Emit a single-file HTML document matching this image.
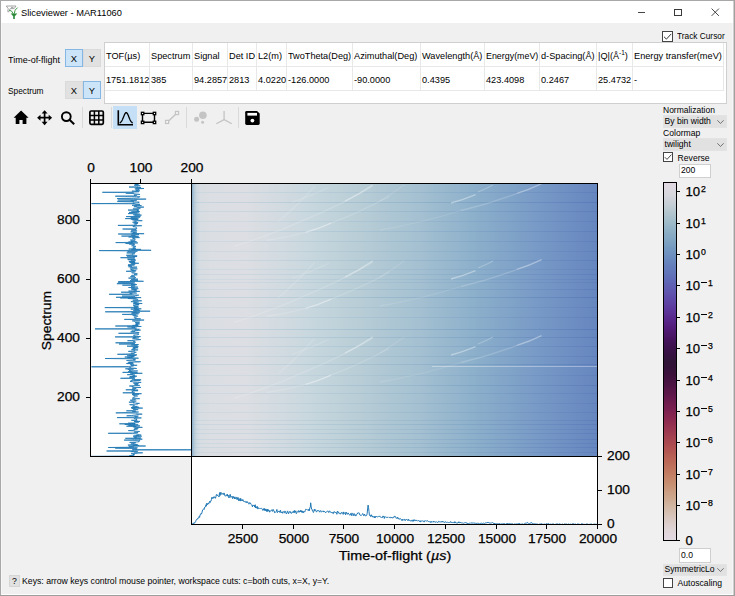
<!DOCTYPE html>
<html><head><meta charset="utf-8"><style>
html,body{margin:0;padding:0}
body{width:735px;height:596px;position:relative;overflow:hidden;background:#f0f0f0;font-family:"Liberation Sans", sans-serif}
.t{position:absolute;white-space:nowrap;line-height:1;color:#000}
sup{font-size:70%;vertical-align:0;position:relative;top:-0.5em}
sup.m{font-size:66%;top:-0.47em;margin-left:0.8px}
.mn{display:inline-block;width:5.6px;height:1.2px;background:#000;vertical-align:0.3em;margin-right:1.4px}
.mt{color:#000;-webkit-text-stroke:0.25px #000}
</style></head><body>
<div style="position:absolute;left:0px;top:0px;width:735px;height:23px;background:#fff;"></div>
<div style="position:absolute;left:0px;top:0px;width:735px;height:1px;background:#a8a8a8;"></div>
<div style="position:absolute;left:0px;top:0px;width:1px;height:596px;background:#a8a8a8;"></div>
<div style="position:absolute;left:734px;top:0px;width:1px;height:596px;background:#a0a0a0;"></div>
<div style="position:absolute;left:733px;top:1px;width:1px;height:594px;background:#cfcfcf;"></div>
<div style="position:absolute;left:732px;top:23px;width:1px;height:571px;background:#f6f6f6;"></div>
<div style="position:absolute;left:0px;top:595px;width:735px;height:1px;background:#9c9c9c;"></div>
<div style="position:absolute;left:1px;top:594px;width:732px;height:1px;background:#fdfdfd;"></div>
<div style="position:absolute;left:1px;top:23px;width:1px;height:571px;background:#f6f6f6;"></div>
<svg style="position:absolute;left:5px;top:4.6px" width="16" height="16" viewBox="0 0 16 16">
<path d="M1.3 1.0 H11 L9.2 3.6 H5.2 L3.8 6.8 H2.8 L3.2 3.6 Z" fill="#fff" stroke="#9a9a9a" stroke-width="0.9" stroke-linejoin="round"/><path d="M6 2.4 H8.4" stroke="#888" stroke-width="0.8"/>
<path d="M4.2 5.2 Q7.2 5.4 8.2 8.8 M12.6 2.6 Q9.4 4.6 9.2 8.8" fill="none" stroke="#3f9a4a" stroke-width="1"/>
<path d="M5.6 8.6 H12.4 L9.8 11.2 V14 H8.2 V11.2 Z" fill="#2a8a3a"/>
</svg>
<div class="t" style="left:20.70px;top:8.30px;font-size:9.5px;color:#000;transform:scaleX(0.9767);transform-origin:0 0;">Sliceviewer - MAR11060</div>
<div style="position:absolute;left:638px;top:12px;width:7px;height:1px;background:#444;"></div>
<div style="position:absolute;left:674px;top:9px;width:8px;height:7px;border:1px solid #3a3a3a;box-sizing:border-box"></div>
<svg style="position:absolute;left:711px;top:8px" width="9" height="9" viewBox="0 0 9 9"><path d="M0.6 0.6 L7.9 7.9 M7.9 0.6 L0.6 7.9" stroke="#333" stroke-width="0.9"/></svg>
<div class="t" style="left:8.30px;top:54.80px;font-size:9.5px;color:#000;transform:scaleX(0.9460);transform-origin:0 0;">Time-of-flight</div>
<div class="t" style="left:8.30px;top:85.80px;font-size:9.8px;color:#000;transform:scaleX(0.8465);transform-origin:0 0;">Spectrum</div>
<div style="position:absolute;left:65px;top:49px;width:18px;height:18px;box-sizing:border-box;background:#cce4f7;border:1px solid #86b6e4;"></div>
<div class="t" style="left:65px;width:18px;text-align:center;top:52.5px;font-size:9.4px;line-height:12px">X</div>
<div style="position:absolute;left:83px;top:49px;width:18px;height:18px;box-sizing:border-box;background:#e1e1e1;border:1px solid #dadada;"></div>
<div class="t" style="left:83px;width:18px;text-align:center;top:52.5px;font-size:9.4px;line-height:12px">Y</div>
<div style="position:absolute;left:65px;top:81px;width:18px;height:18px;box-sizing:border-box;background:#e1e1e1;border:1px solid #dadada;"></div>
<div class="t" style="left:65px;width:18px;text-align:center;top:84.5px;font-size:9.4px;line-height:12px">X</div>
<div style="position:absolute;left:83px;top:81px;width:18px;height:18px;box-sizing:border-box;background:#cce4f7;border:1px solid #86b6e4;"></div>
<div class="t" style="left:83px;width:18px;text-align:center;top:84.5px;font-size:9.4px;line-height:12px">Y</div>
<div style="position:absolute;left:662px;top:31px;width:11px;height:11px;box-sizing:border-box;border:1px solid #444;background:#fff"></div>
<svg style="position:absolute;left:662px;top:31px" width="11" height="11" viewBox="0 0 10 10"><path d="M1.8 5.2 L4 7.4 L8.4 2.6" fill="none" stroke="#333" stroke-width="0.9"/></svg>
<div class="t" style="left:677.30px;top:32.00px;font-size:8.6px;color:#000;transform:scaleX(0.9661);transform-origin:0 0;">Track Cursor</div>
<div style="position:absolute;left:104px;top:42px;width:623px;height:62px;background:#fff;border:1px solid #cfcfcf;box-sizing:border-box"></div>
<div style="position:absolute;left:149px;top:43px;width:1px;height:47px;background:#e8e8e8;"></div>
<div style="position:absolute;left:192px;top:43px;width:1px;height:47px;background:#e8e8e8;"></div>
<div style="position:absolute;left:227px;top:43px;width:1px;height:47px;background:#e8e8e8;"></div>
<div style="position:absolute;left:256px;top:43px;width:1px;height:47px;background:#e8e8e8;"></div>
<div style="position:absolute;left:286px;top:43px;width:1px;height:47px;background:#e8e8e8;"></div>
<div style="position:absolute;left:352px;top:43px;width:1px;height:47px;background:#e8e8e8;"></div>
<div style="position:absolute;left:420px;top:43px;width:1px;height:47px;background:#e8e8e8;"></div>
<div style="position:absolute;left:484px;top:43px;width:1px;height:47px;background:#e8e8e8;"></div>
<div style="position:absolute;left:539px;top:43px;width:1px;height:47px;background:#e8e8e8;"></div>
<div style="position:absolute;left:596px;top:43px;width:1px;height:47px;background:#e8e8e8;"></div>
<div style="position:absolute;left:632px;top:43px;width:1px;height:47px;background:#e8e8e8;"></div>
<div style="position:absolute;left:723px;top:43px;width:1px;height:47px;background:#e8e8e8;"></div>
<div style="position:absolute;left:105px;top:66px;width:619px;height:1px;background:#e8e8e8;"></div>
<div style="position:absolute;left:105px;top:90px;width:619px;height:1px;background:#e8e8e8;"></div>
<div class="t" style="left:106.00px;top:51.50px;font-size:9.2px;color:#000;transform:scaleX(1.0000);transform-origin:0 0;">TOF(µs)</div>
<div class="t" style="left:106.00px;top:75.50px;font-size:9.2px;color:#000;">1751.1812</div>
<div class="t" style="left:151.00px;top:51.50px;font-size:9.2px;color:#000;transform:scaleX(1.0000);transform-origin:0 0;">Spectrum</div>
<div class="t" style="left:151.00px;top:75.50px;font-size:9.2px;color:#000;">385</div>
<div class="t" style="left:194.00px;top:51.50px;font-size:9.2px;color:#000;transform:scaleX(1.0000);transform-origin:0 0;">Signal</div>
<div class="t" style="left:194.00px;top:75.50px;font-size:9.2px;color:#000;">94.2857</div>
<div class="t" style="left:229.00px;top:51.50px;font-size:9.2px;color:#000;transform:scaleX(1.0000);transform-origin:0 0;">Det ID</div>
<div class="t" style="left:229.00px;top:75.50px;font-size:9.2px;color:#000;">2813</div>
<div class="t" style="left:258.00px;top:51.50px;font-size:9.2px;color:#000;transform:scaleX(1.0000);transform-origin:0 0;">L2(m)</div>
<div class="t" style="left:258.00px;top:75.50px;font-size:9.2px;color:#000;">4.0220</div>
<div class="t" style="left:288.00px;top:51.50px;font-size:9.2px;color:#000;transform:scaleX(0.9968);transform-origin:0 0;">TwoTheta(Deg)</div>
<div class="t" style="left:288.00px;top:75.50px;font-size:9.2px;color:#000;">-126.0000</div>
<div class="t" style="left:354.00px;top:51.50px;font-size:9.2px;color:#000;transform:scaleX(1.0000);transform-origin:0 0;">Azimuthal(Deg)</div>
<div class="t" style="left:354.00px;top:75.50px;font-size:9.2px;color:#000;">-90.0000</div>
<div class="t" style="left:422.00px;top:51.50px;font-size:9.2px;color:#000;transform:scaleX(1.0000);transform-origin:0 0;">Wavelength(Å)</div>
<div class="t" style="left:422.00px;top:75.50px;font-size:9.2px;color:#000;">0.4395</div>
<div class="t" style="left:486.00px;top:51.50px;font-size:9.2px;color:#000;transform:scaleX(0.9669);transform-origin:0 0;">Energy(meV)</div>
<div class="t" style="left:486.00px;top:75.50px;font-size:9.2px;color:#000;">423.4098</div>
<div class="t" style="left:541.00px;top:51.50px;font-size:9.2px;color:#000;transform:scaleX(1.0000);transform-origin:0 0;">d-Spacing(Å)</div>
<div class="t" style="left:541.00px;top:75.50px;font-size:9.2px;color:#000;">0.2467</div>
<div class="t" style="left:598.00px;top:51.50px;font-size:9.2px;color:#000;transform:scaleX(1.0000);transform-origin:0 0;">|Q|(Å<sup>-1</sup>)</div>
<div class="t" style="left:598.00px;top:75.50px;font-size:9.2px;color:#000;">25.4732</div>
<div class="t" style="left:634.00px;top:51.50px;font-size:9.2px;color:#000;transform:scaleX(1.0000);transform-origin:0 0;">Energy transfer(meV)</div>
<div class="t" style="left:634.00px;top:75.50px;font-size:9.2px;color:#000;">-</div>
<div style="position:absolute;left:113px;top:106px;width:24px;height:23px;background:#c4dff6;"></div>
<div style="position:absolute;left:82px;top:107px;width:1px;height:21px;background:#dadada;"></div>
<div style="position:absolute;left:111px;top:107px;width:1px;height:21px;background:#dadada;"></div>
<div style="position:absolute;left:186px;top:107px;width:1px;height:21px;background:#dadada;"></div>
<div style="position:absolute;left:238px;top:107px;width:1px;height:21px;background:#dadada;"></div>
<svg style="position:absolute;left:0;top:100px" width="270" height="32" viewBox="0 100 270 32">
<path d="M21.1 110.6 L28.6 117.8 H26.4 V124 H22.6 V120 H19.4 V124 H15.7 V117.8 H13.6 Z" fill="#000"/>
<g fill="#000">
<path d="M44.6 110.2 L47.6 113.6 H41.6 Z"/><path d="M44.6 125.2 L47.6 121.8 H41.6 Z"/>
<path d="M37.1 117.7 L40.5 114.7 V120.7 Z"/><path d="M52.1 117.7 L48.7 114.7 V120.7 Z"/>
</g>
<path d="M44.6 113 V122.4 M39.8 117.7 H49.4" stroke="#000" stroke-width="1.7"/>
<circle cx="66.3" cy="116.6" r="4.4" fill="none" stroke="#000" stroke-width="1.9"/>
<path d="M69.5 119.8 L74.2 124.3" stroke="#000" stroke-width="2"/>
<rect x="89.9" y="111" width="13.4" height="13.4" rx="1.3" fill="none" stroke="#000" stroke-width="1.7"/>
<path d="M94.4 111 V124.4 M98.8 111 V124.4 M89.9 115.5 H103.3 M89.9 119.9 H103.3" stroke="#000" stroke-width="1.5"/>
<path d="M118.3 110.3 V124.8 H133" fill="none" stroke="#000" stroke-width="1.6"/>
<polyline points="119.60,122.97 119.93,122.81 120.26,122.61 120.59,122.35 120.92,122.03 121.25,121.64 121.58,121.17 121.91,120.63 122.24,120.01 122.57,119.32 122.90,118.57 123.23,117.78 123.56,116.95 123.89,116.12 124.22,115.32 124.55,114.57 124.88,113.91 125.21,113.36 125.54,112.94 125.87,112.69 126.20,112.60 126.53,112.69 126.86,112.94 127.19,113.36 127.52,113.91 127.85,114.57 128.18,115.32 128.51,116.12 128.84,116.95 129.17,117.78 129.50,118.57 129.83,119.32 130.16,120.01 130.49,120.63 130.82,121.17 131.15,121.64 131.48,122.03 131.81,122.35 132.14,122.61 132.47,122.81 132.80,122.97" fill="none" stroke="#000" stroke-width="1.3"/>
<path d="M142.5 113.4 H154.5 M142.5 122.3 H154.5 M142.5 113.4 V122.3 M154.5 113.4 V122.3" stroke="#000" stroke-width="1.4"/>
<g fill="#fff" stroke="#000" stroke-width="1.3">
<rect x="141.4" y="112.3" width="2.4" height="2.4"/><rect x="153.3" y="112.3" width="2.4" height="2.4"/>
<rect x="141.4" y="121.2" width="2.4" height="2.4"/><rect x="153.3" y="121.2" width="2.4" height="2.4"/>
</g>
<path d="M167.5 122 L176.5 113.5" stroke="#c4c4c4" stroke-width="1.4"/>
<g fill="#fff" stroke="#c4c4c4" stroke-width="1.3"><rect x="165.6" y="120.4" width="3" height="3"/><rect x="175.5" y="111.5" width="3" height="3"/></g>
<g fill="#c4c4c4"><circle cx="202.9" cy="115.2" r="3.8"/><circle cx="196.6" cy="119.3" r="2.5"/><circle cx="202.6" cy="122.3" r="1.5"/></g>
<path d="M224.1 111 V119.6 M224.1 119.6 L216.3 123.8 M224.1 119.6 L231.8 123.8" stroke="#c4c4c4" stroke-width="1.3" fill="none"/>
<path d="M245.2 112.3 Q245.2 110.9 246.6 110.9 H257 L259.7 113.6 V123.6 Q259.7 125 258.3 125 H246.6 Q245.2 125 245.2 123.6 Z" fill="#000"/>
<rect x="247.4" y="112.9" width="9.6" height="2.7" fill="#fff"/>
<circle cx="252.4" cy="120.6" r="1.9" fill="#fff"/>
</svg>
<div class="t" style="left:663.00px;top:106.00px;font-size:8.6px;color:#000;transform:scaleX(0.9872);transform-origin:0 0;">Normalization</div>
<div style="position:absolute;left:663px;top:115px;width:64px;height:13px;background:#e1e1e1;box-sizing:border-box;border:1px solid #e3e3e3"></div>
<div class="t" style="left:664.50px;top:117.00px;font-size:8.6px;color:#000;">By bin width</div>
<svg style="position:absolute;left:717px;top:119.5px" width="7" height="4" viewBox="0 0 7 4"><path d="M0.3 0.3 L3.5 3.4 L6.7 0.3" fill="none" stroke="#444" stroke-width="0.7"/></svg>
<div class="t" style="left:663.00px;top:129.00px;font-size:8.6px;color:#000;">Colormap</div>
<div style="position:absolute;left:663px;top:138px;width:64px;height:13px;background:#e1e1e1;box-sizing:border-box;border:1px solid #e3e3e3"></div>
<div class="t" style="left:664.50px;top:140.00px;font-size:8.6px;color:#000;">twilight</div>
<svg style="position:absolute;left:717px;top:142.5px" width="7" height="4" viewBox="0 0 7 4"><path d="M0.3 0.3 L3.5 3.4 L6.7 0.3" fill="none" stroke="#444" stroke-width="0.7"/></svg>
<div style="position:absolute;left:663px;top:152px;width:10px;height:10px;box-sizing:border-box;border:1px solid #444;background:#fff"></div>
<svg style="position:absolute;left:663px;top:152px" width="10" height="10" viewBox="0 0 10 10"><path d="M1.8 5.2 L4 7.4 L8.4 2.6" fill="none" stroke="#333" stroke-width="0.9"/></svg>
<div class="t" style="left:677.60px;top:153.50px;font-size:8.6px;color:#000;">Reverse</div>
<div style="position:absolute;left:679px;top:164px;width:32px;height:14px;background:#fff;border:1px solid #cfcfcf;box-sizing:border-box"></div>
<div class="t" style="left:681.00px;top:166.00px;font-size:8.6px;color:#000;">200</div>
<div style="position:absolute;left:679px;top:548px;width:32px;height:15px;background:#fff;border:1px solid #cfcfcf;box-sizing:border-box"></div>
<div class="t" style="left:681.00px;top:550.50px;font-size:8.6px;color:#000;">0.0</div>
<div style="position:absolute;left:663px;top:563.5px;width:64px;height:12.5px;background:#e1e1e1;box-sizing:border-box;border:1px solid #e3e3e3"></div>
<div class="t" style="left:664.50px;top:565.25px;font-size:8.6px;color:#000;">SymmetricLo</div>
<svg style="position:absolute;left:717px;top:567.75px" width="7" height="4" viewBox="0 0 7 4"><path d="M0.3 0.3 L3.5 3.4 L6.7 0.3" fill="none" stroke="#444" stroke-width="0.7"/></svg>
<div style="position:absolute;left:663px;top:578px;width:10px;height:10px;box-sizing:border-box;border:1px solid #444;background:#fff"></div>
<div class="t" style="left:677.60px;top:579.00px;font-size:8.6px;color:#000;">Autoscaling</div>
<div style="position:absolute;left:663px;top:182px;width:14px;height:359px;box-sizing:border-box;border:1px solid #000;background:linear-gradient(to bottom,#e2d9e2 0.00%,#ddd9e0 1.67%,#d6d7dd 3.33%,#ccd2d8 5.00%,#c1cdd3 6.67%,#b3c6ce 8.33%,#a7c0cb 10.00%,#9ab8c8 11.67%,#8fb1c6 13.33%,#85a9c4 15.00%,#7ca2c2 16.67%,#7499c1 18.33%,#6e91c0 20.00%,#6888be 21.67%,#647ebc 23.33%,#6276ba 25.00%,#606db8 26.67%,#5f62b4 28.33%,#5f59b1 30.00%,#5e4eab 31.67%,#5e45a6 33.33%,#5d3a9e 35.00%,#5b3095 36.67%,#58268a 38.33%,#541e7e 40.00%,#4e186f 41.67%,#471461 43.33%,#401253 45.00%,#3a1148 46.67%,#34113e 48.33%,#301437 50.00%,#341238 51.67%,#3a113a 53.33%,#43123e 55.00%,#4d1443 56.67%,#581647 58.33%,#63184b 60.00%,#6f1c4e 61.67%,#792050 63.33%,#842550 65.00%,#8d2b50 66.67%,#963350 68.33%,#9e3b50 70.00%,#a54450 71.67%,#ac4c50 73.33%,#b25652 75.00%,#b86155 76.67%,#bc6a58 78.33%,#c0755e 80.00%,#c37f64 81.67%,#c68a6d 83.33%,#c89477 85.00%,#cb9f83 86.67%,#cda88f 88.33%,#d0b39e 90.00%,#d4bcac 91.67%,#d8c5bb 93.33%,#dbccc8 95.00%,#ded3d4 96.67%,#e1d7dc 98.33%,#e2d9e2 100.00%)"></div>
<div style="position:absolute;left:676px;top:191px;width:4px;height:1px;background:#000;"></div>
<div class="t mt" style="left:685.50px;top:184.80px;font-size:13.2px;transform-origin:0 0;">10<sup class="m">2</sup></div>
<div style="position:absolute;left:676px;top:223px;width:4px;height:1px;background:#000;"></div>
<div class="t mt" style="left:685.50px;top:216.80px;font-size:13.2px;transform-origin:0 0;">10<sup class="m">1</sup></div>
<div style="position:absolute;left:676px;top:254px;width:4px;height:1px;background:#000;"></div>
<div class="t mt" style="left:685.50px;top:247.80px;font-size:13.2px;transform-origin:0 0;">10<sup class="m">0</sup></div>
<div style="position:absolute;left:676px;top:285px;width:4px;height:1px;background:#000;"></div>
<div class="t mt" style="left:685.50px;top:278.80px;font-size:13.2px;transform-origin:0 0;">10<sup class="m"><span class="mn"></span>1</sup></div>
<div style="position:absolute;left:676px;top:317px;width:4px;height:1px;background:#000;"></div>
<div class="t mt" style="left:685.50px;top:310.80px;font-size:13.2px;transform-origin:0 0;">10<sup class="m"><span class="mn"></span>2</sup></div>
<div style="position:absolute;left:676px;top:348px;width:4px;height:1px;background:#000;"></div>
<div class="t mt" style="left:685.50px;top:341.80px;font-size:13.2px;transform-origin:0 0;">10<sup class="m"><span class="mn"></span>3</sup></div>
<div style="position:absolute;left:676px;top:380px;width:4px;height:1px;background:#000;"></div>
<div class="t mt" style="left:685.50px;top:373.80px;font-size:13.2px;transform-origin:0 0;">10<sup class="m"><span class="mn"></span>4</sup></div>
<div style="position:absolute;left:676px;top:411px;width:4px;height:1px;background:#000;"></div>
<div class="t mt" style="left:685.50px;top:404.80px;font-size:13.2px;transform-origin:0 0;">10<sup class="m"><span class="mn"></span>5</sup></div>
<div style="position:absolute;left:676px;top:442px;width:4px;height:1px;background:#000;"></div>
<div class="t mt" style="left:685.50px;top:435.80px;font-size:13.2px;transform-origin:0 0;">10<sup class="m"><span class="mn"></span>6</sup></div>
<div style="position:absolute;left:676px;top:474px;width:4px;height:1px;background:#000;"></div>
<div class="t mt" style="left:685.50px;top:467.80px;font-size:13.2px;transform-origin:0 0;">10<sup class="m"><span class="mn"></span>7</sup></div>
<div style="position:absolute;left:676px;top:505px;width:4px;height:1px;background:#000;"></div>
<div class="t mt" style="left:685.50px;top:498.80px;font-size:13.2px;transform-origin:0 0;">10<sup class="m"><span class="mn"></span>8</sup></div>
<div style="position:absolute;left:676px;top:540px;width:4px;height:1px;background:#000;"></div>
<div class="t mt" style="left:685.50px;top:533.80px;font-size:13.2px;transform-origin:0 0;">0</div>
<div style="position:absolute;left:90px;top:183px;width:101px;height:273px;background:#fff;"></div>
<div style="position:absolute;left:191px;top:456px;width:406px;height:68px;background:#fff;"></div>
<div style="position:absolute;left:192px;top:184px;width:405px;height:272px;background:linear-gradient(to right,#8aaecb 0.00%,#b2c8d6 0.49%,#cbd7df 1.11%,#d7dde2 2.09%,#dbdee3 4.56%,#dcdee3 13.18%,#d5dce1 19.33%,#c8d7de 29.19%,#b8cdd6 41.50%,#a4c0d1 56.28%,#8aaeca 71.06%,#7799c6 85.84%,#6686bf 100.00%);"></div>
<svg style="position:absolute;left:192px;top:184px" width="405" height="272"><defs><linearGradient id="lg" x1="0" x2="1" y1="0" y2="0"><stop offset="0" stop-color="#8fbad2"/><stop offset="0.4" stop-color="#6a9cc0"/><stop offset="1" stop-color="#3558a8"/></linearGradient></defs><rect x="0" y="8" width="405" height="1" fill="url(#lg)" opacity="0.16"/><rect x="0" y="18" width="405" height="1" fill="url(#lg)" opacity="0.26"/><rect x="0" y="27" width="405" height="1" fill="url(#lg)" opacity="0.19"/><rect x="0" y="37" width="405" height="1" fill="url(#lg)" opacity="0.14"/><rect x="0" y="47" width="405" height="1" fill="url(#lg)" opacity="0.18"/><rect x="0" y="57" width="405" height="1" fill="url(#lg)" opacity="0.16"/><rect x="0" y="67" width="405" height="1" fill="url(#lg)" opacity="0.14"/><rect x="0" y="76" width="405" height="1" fill="url(#lg)" opacity="0.18"/><rect x="0" y="85" width="405" height="1" fill="url(#lg)" opacity="0.13"/><rect x="0" y="90" width="405" height="1" fill="url(#lg)" opacity="0.17"/><rect x="0" y="95" width="405" height="1" fill="url(#lg)" opacity="0.14"/><rect x="0" y="98" width="405" height="1" fill="url(#lg)" opacity="0.14"/><rect x="0" y="105" width="405" height="1" fill="url(#lg)" opacity="0.17"/><rect x="0" y="113" width="405" height="1" fill="url(#lg)" opacity="0.26"/><rect x="0" y="123" width="405" height="1" fill="url(#lg)" opacity="0.14"/><rect x="0" y="133" width="405" height="1" fill="url(#lg)" opacity="0.15"/><rect x="0" y="145" width="405" height="1" fill="url(#lg)" opacity="0.26"/><rect x="0" y="153" width="405" height="1" fill="url(#lg)" opacity="0.22"/><rect x="0" y="162" width="405" height="1" fill="url(#lg)" opacity="0.18"/><rect x="0" y="172" width="405" height="1" fill="url(#lg)" opacity="0.17"/><rect x="0" y="180" width="405" height="1" fill="url(#lg)" opacity="0.22"/><rect x="0" y="191" width="405" height="1" fill="url(#lg)" opacity="0.13"/><rect x="0" y="201" width="405" height="1" fill="url(#lg)" opacity="0.21"/><rect x="0" y="209" width="405" height="1" fill="url(#lg)" opacity="0.16"/><rect x="0" y="219" width="405" height="1" fill="url(#lg)" opacity="0.14"/><rect x="0" y="228" width="405" height="1" fill="url(#lg)" opacity="0.14"/><rect x="0" y="236" width="405" height="1" fill="url(#lg)" opacity="0.16"/><rect x="0" y="240" width="405" height="1" fill="url(#lg)" opacity="0.20"/><rect x="0" y="245" width="405" height="1" fill="url(#lg)" opacity="0.15"/><rect x="0" y="249" width="405" height="1" fill="url(#lg)" opacity="0.18"/><rect x="0" y="255" width="405" height="1" fill="url(#lg)" opacity="0.19"/><rect x="0" y="259" width="405" height="1" fill="url(#lg)" opacity="0.16"/><rect x="0" y="263" width="405" height="1" fill="url(#lg)" opacity="0.18"/><rect x="0" y="268" width="405" height="1" fill="url(#lg)" opacity="0.14"/><rect x="240" y="182" width="166" height="1" fill="#ffffff" opacity="0.35"/><path d="M41.9 62.3 Q81.7 50.3 118.3 33.4" stroke="#fff" stroke-width="1.3" opacity="0.16" fill="none"/><path d="M118.3 33.4 Q150.9 19.8 180.8 2.1" stroke="#fff" stroke-width="1.3" opacity="0.16" fill="none"/><path d="M74.3 56.5 Q94.8 53.7 113.6 48.4" stroke="#fff" stroke-width="1.3" opacity="0.14" fill="none"/><path d="M113.6 48.4 Q126.9 44.6 139.1 39.1" stroke="#fff" stroke-width="1.3" opacity="0.4" fill="none"/><path d="M139.1 39.1 Q169.3 27.7 197.0 12.5" stroke="#fff" stroke-width="1.3" opacity="0.16" fill="none"/><path d="M85.9 38.0 Q105.4 21.6 122.9 2.1" stroke="#fff" stroke-width="1.3" opacity="0.13" fill="none"/><path d="M99.8 18.3 Q119.1 12.0 136.8 3.3" stroke="#fff" stroke-width="1.3" opacity="0.13" fill="none"/><path d="M153.0 17.1 Q167.5 10.0 180.8 0.9" stroke="#fff" stroke-width="1.3" opacity="0.3" fill="none"/><path d="M259.0 19.0 Q271.8 15.6 283.5 10.6" stroke="#fff" stroke-width="1.3" opacity="0.36" fill="none"/><path d="M286.0 8.0 Q293.8 5.0 301.0 1.0" stroke="#fff" stroke-width="1.3" opacity="0.24" fill="none"/><path d="M269.0 26.5 Q298.2 19.7 325.0 9.4" stroke="#fff" stroke-width="1.3" opacity="0.18" fill="none"/><path d="M325.0 9.4 Q337.8 5.3 349.6 -0.4" stroke="#fff" stroke-width="1.3" opacity="0.36" fill="none"/><path d="M188.0 46.0 Q230.2 38.7 269.0 26.5" stroke="#fff" stroke-width="1.3" opacity="0.11" fill="none"/><path d="M188.0 16.7 Q200.8 9.6 212.5 0.8" stroke="#fff" stroke-width="1.3" opacity="0.11" fill="none"/><path d="M41.9 138.3 Q81.7 126.3 118.3 109.4" stroke="#fff" stroke-width="1.3" opacity="0.16" fill="none"/><path d="M118.3 109.4 Q150.9 95.8 180.8 78.1" stroke="#fff" stroke-width="1.3" opacity="0.16" fill="none"/><path d="M74.3 132.5 Q94.8 129.7 113.6 124.4" stroke="#fff" stroke-width="1.3" opacity="0.14" fill="none"/><path d="M113.6 124.4 Q126.9 120.6 139.1 115.1" stroke="#fff" stroke-width="1.3" opacity="0.4" fill="none"/><path d="M139.1 115.1 Q169.3 103.7 197.0 88.5" stroke="#fff" stroke-width="1.3" opacity="0.16" fill="none"/><path d="M85.9 114.0 Q105.4 97.6 122.9 78.1" stroke="#fff" stroke-width="1.3" opacity="0.13" fill="none"/><path d="M99.8 94.3 Q119.1 88.0 136.8 79.3" stroke="#fff" stroke-width="1.3" opacity="0.13" fill="none"/><path d="M153.0 93.1 Q167.5 86.0 180.8 76.9" stroke="#fff" stroke-width="1.3" opacity="0.3" fill="none"/><path d="M259.0 95.0 Q271.8 91.6 283.5 86.6" stroke="#fff" stroke-width="1.3" opacity="0.36" fill="none"/><path d="M286.0 84.0 Q293.8 81.0 301.0 77.0" stroke="#fff" stroke-width="1.3" opacity="0.24" fill="none"/><path d="M269.0 102.5 Q298.2 95.7 325.0 85.4" stroke="#fff" stroke-width="1.3" opacity="0.18" fill="none"/><path d="M325.0 85.4 Q337.8 81.3 349.6 75.6" stroke="#fff" stroke-width="1.3" opacity="0.36" fill="none"/><path d="M188.0 122.0 Q230.2 114.7 269.0 102.5" stroke="#fff" stroke-width="1.3" opacity="0.11" fill="none"/><path d="M188.0 92.7 Q200.8 85.6 212.5 76.8" stroke="#fff" stroke-width="1.3" opacity="0.11" fill="none"/><path d="M41.9 214.3 Q81.7 202.3 118.3 185.4" stroke="#fff" stroke-width="1.3" opacity="0.16" fill="none"/><path d="M118.3 185.4 Q150.9 171.8 180.8 154.1" stroke="#fff" stroke-width="1.3" opacity="0.16" fill="none"/><path d="M74.3 208.5 Q94.8 205.7 113.6 200.4" stroke="#fff" stroke-width="1.3" opacity="0.14" fill="none"/><path d="M113.6 200.4 Q126.9 196.6 139.1 191.1" stroke="#fff" stroke-width="1.3" opacity="0.4" fill="none"/><path d="M139.1 191.1 Q169.3 179.7 197.0 164.5" stroke="#fff" stroke-width="1.3" opacity="0.16" fill="none"/><path d="M85.9 190.0 Q105.4 173.6 122.9 154.1" stroke="#fff" stroke-width="1.3" opacity="0.13" fill="none"/><path d="M99.8 170.3 Q119.1 164.0 136.8 155.3" stroke="#fff" stroke-width="1.3" opacity="0.13" fill="none"/><path d="M153.0 169.1 Q167.5 162.0 180.8 152.9" stroke="#fff" stroke-width="1.3" opacity="0.3" fill="none"/><path d="M259.0 171.0 Q271.8 167.6 283.5 162.6" stroke="#fff" stroke-width="1.3" opacity="0.36" fill="none"/><path d="M286.0 160.0 Q293.8 157.0 301.0 153.0" stroke="#fff" stroke-width="1.3" opacity="0.24" fill="none"/><path d="M269.0 178.5 Q298.2 171.7 325.0 161.4" stroke="#fff" stroke-width="1.3" opacity="0.18" fill="none"/><path d="M325.0 161.4 Q337.8 157.3 349.6 151.6" stroke="#fff" stroke-width="1.3" opacity="0.36" fill="none"/><path d="M188.0 198.0 Q230.2 190.7 269.0 178.5" stroke="#fff" stroke-width="1.3" opacity="0.11" fill="none"/><path d="M188.0 168.7 Q200.8 161.6 212.5 152.8" stroke="#fff" stroke-width="1.3" opacity="0.11" fill="none"/></svg>
<svg style="position:absolute;left:0;top:0" width="735" height="596"><defs><clipPath id="cs"><rect x="91" y="184" width="100" height="272"/></clipPath><clipPath id="cb"><rect x="192" y="457" width="405" height="67"/></clipPath></defs><polyline clip-path="url(#cs)" points="90.5,456.6 91.5,456.3 133.4,456.0 129.4,455.7 133.8,455.4 133.6,455.2 134.4,454.9 132.9,454.6 134.6,454.3 133.4,454.0 131.1,453.7 137.3,453.4 137.3,453.1 142.7,452.8 135.0,452.5 133.8,452.2 133.5,451.9 130.7,451.6 137.8,451.3 106.6,451.0 131.8,450.7 134.6,450.4 139.3,450.1 221.8,449.8 132.4,449.5 133.3,449.2 137.0,448.9 134.9,448.6 129.3,448.4 115.2,448.1 137.5,447.8 108.2,447.5 132.0,447.2 133.8,446.9 133.3,446.6 128.8,446.3 145.6,446.0 132.8,445.7 138.8,445.4 127.9,445.1 131.2,444.8 137.5,444.5 134.7,444.2 130.9,443.9 134.1,443.6 134.2,443.3 133.4,443.0 135.9,442.7 129.6,442.4 135.2,442.1 138.7,441.8 138.3,441.6 139.1,441.3 139.1,441.0 140.1,440.7 132.9,440.4 124.1,440.1 130.9,439.8 134.4,439.5 142.3,439.2 139.0,438.9 139.9,438.6 125.3,438.3 141.1,438.0 134.3,437.7 136.6,437.4 136.7,437.1 133.3,436.8 137.5,436.5 141.7,436.2 133.4,435.9 138.8,435.6 135.9,435.3 141.2,435.0 137.7,434.8 138.2,434.5 138.1,434.2 137.1,433.9 132.5,433.6 108.2,433.3 132.6,433.0 137.1,432.7 138.1,432.4 134.1,432.1 136.8,431.8 139.7,431.5 136.4,431.2 134.0,430.9 128.3,430.6 133.7,430.3 134.8,430.0 135.0,429.7 133.8,429.4 137.5,429.1 134.9,428.8 136.2,428.5 138.3,428.2 134.1,428.0 135.6,427.7 142.4,427.4 138.9,427.1 132.8,426.8 136.2,426.5 126.5,426.2 139.9,425.9 128.5,425.6 134.9,425.3 134.4,425.0 138.2,424.7 124.7,424.4 135.0,424.1 119.4,423.8 135.2,423.5 128.1,423.2 134.4,422.9 137.7,422.6 138.7,422.3 137.7,422.0 134.0,421.7 140.0,421.4 134.4,421.2 137.4,420.9 134.2,420.6 131.4,420.3 136.8,420.0 137.0,419.7 136.0,419.4 136.9,419.1 134.3,418.8 134.1,418.5 135.6,418.2 141.4,417.9 117.0,417.6 134.6,417.3 137.6,417.0 134.7,416.7 134.7,416.4 138.4,416.1 126.7,415.8 131.3,415.5 133.4,415.2 136.1,414.9 136.2,414.6 139.3,414.4 142.2,414.1 137.8,413.8 136.9,413.5 135.3,413.2 115.8,412.9 121.8,412.6 133.2,412.3 138.6,412.0 132.2,411.7 135.7,411.4 135.5,411.1 126.4,410.8 133.5,410.5 135.4,410.2 135.0,409.9 138.2,409.6 133.1,409.3 135.5,409.0 134.6,408.7 131.7,408.4 142.7,408.1 135.0,407.8 131.0,407.6 139.1,407.3 132.1,407.0 136.1,406.7 137.4,406.4 133.2,406.1 133.8,405.8 133.5,405.5 134.6,405.2 130.4,404.9 129.6,404.6 134.4,404.3 137.7,404.0 136.5,403.7 139.5,403.4 136.6,403.1 133.2,402.8 134.3,402.5 128.9,402.2 131.9,401.9 131.7,401.6 135.2,401.3 136.3,401.0 132.9,400.8 132.7,400.5 130.1,400.2 134.0,399.9 135.0,399.6 135.5,399.3 132.0,399.0 139.7,398.7 137.5,398.4 133.9,398.1 132.6,397.8 133.2,397.5 134.4,397.2 133.9,396.9 135.3,396.6 136.1,396.3 137.7,396.0 137.0,395.7 133.5,395.4 134.9,395.1 132.7,394.8 132.1,394.5 139.0,394.2 132.4,394.0 141.5,393.7 132.6,393.4 134.3,393.1 122.8,392.8 133.6,392.5 134.6,392.2 132.8,391.9 132.1,391.6 132.9,391.3 131.6,391.0 137.9,390.7 132.8,390.4 138.1,390.1 125.8,389.8 133.3,389.5 134.8,389.2 132.4,388.9 136.2,388.6 134.9,388.3 132.3,388.0 134.3,387.7 140.9,387.4 133.7,387.2 133.8,386.9 131.8,386.6 133.3,386.3 129.3,386.0 132.4,385.7 139.7,385.4 135.8,385.1 134.6,384.8 135.9,384.5 138.0,384.2 134.4,383.9 138.5,383.6 135.7,383.3 133.2,383.0 137.5,382.7 141.2,382.4 137.6,382.1 133.4,381.8 130.1,381.5 132.2,381.2 130.8,380.9 130.8,380.6 140.1,380.4 134.3,380.1 141.1,379.8 136.2,379.5 131.9,379.2 135.0,378.9 133.5,378.6 120.5,378.3 128.5,378.0 134.6,377.7 132.8,377.4 129.3,377.1 135.4,376.8 130.0,376.5 136.9,376.2 133.9,375.9 134.4,375.6 132.7,375.3 134.9,375.0 127.2,374.7 132.6,374.4 130.7,374.1 133.2,373.8 132.3,373.6 142.3,373.3 130.1,373.0 137.5,372.7 122.6,372.4 131.8,372.1 132.4,371.8 128.1,371.5 135.9,371.2 137.7,370.9 129.1,370.6 130.7,370.3 129.5,370.0 129.4,369.7 127.9,369.4 133.5,369.1 125.4,368.8 136.7,368.5 135.0,368.2 129.6,367.9 129.6,367.6 130.8,367.3 127.9,367.0 91.5,366.8 128.4,366.5 132.4,366.2 133.6,365.9 130.8,365.6 137.1,365.3 133.3,365.0 133.9,364.7 130.3,364.4 132.6,364.1 132.2,363.8 126.4,363.5 133.5,363.2 127.8,362.9 132.7,362.6 128.7,362.3 138.4,362.0 140.6,361.7 135.2,361.4 135.4,361.1 129.2,360.8 126.6,360.5 132.0,360.2 135.4,360.0 133.2,359.7 135.2,359.4 135.6,359.1 128.9,358.8 105.1,358.5 138.5,358.2 131.5,357.9 127.5,357.6 132.5,357.3 124.8,357.0 134.4,356.7 130.8,356.4 133.5,356.1 127.1,355.8 135.7,355.5 128.9,355.2 137.0,354.9 129.2,354.6 117.4,354.3 125.2,354.0 134.3,353.7 133.3,353.4 130.8,353.2 134.5,352.9 134.0,352.6 136.3,352.3 134.0,352.0 134.4,351.7 128.3,351.4 130.6,351.1 132.5,350.8 134.7,350.5 133.9,350.2 138.1,349.9 131.5,349.6 133.3,349.3 134.7,349.0 133.4,348.7 135.4,348.4 132.5,348.1 138.1,347.8 133.3,347.5 137.3,347.2 134.1,346.9 138.4,346.6 128.6,346.4 127.0,346.1 133.2,345.8 135.0,345.5 137.7,345.2 131.3,344.9 138.6,344.6 131.8,344.3 119.0,344.0 129.4,343.7 134.9,343.4 131.1,343.1 115.5,342.8 133.7,342.5 135.8,342.2 133.1,341.9 133.5,341.6 134.8,341.3 134.1,341.0 127.5,340.7 133.8,340.4 135.2,340.1 138.1,339.8 140.7,339.6 136.9,339.3 135.3,339.0 132.5,338.7 135.4,338.4 137.4,338.1 138.8,337.8 132.8,337.5 136.0,337.2 115.1,336.9 140.5,336.6 136.1,336.3 133.9,336.0 133.5,335.7 134.5,335.4 133.7,335.1 137.8,334.8 138.5,334.5 137.6,334.2 138.9,333.9 134.4,333.6 118.5,333.3 134.6,333.0 135.9,332.8 139.2,332.5 135.7,332.2 130.6,331.9 135.1,331.6 133.9,331.3 131.7,331.0 133.7,330.7 138.6,330.4 140.6,330.1 134.6,329.8 138.8,329.5 139.3,329.2 95.0,328.9 135.9,328.6 136.0,328.3 136.6,328.0 131.7,327.7 135.2,327.4 128.2,327.1 127.3,326.8 141.3,326.5 135.3,326.2 115.4,326.0 138.1,325.7 132.5,325.4 138.4,325.1 135.3,324.8 137.7,324.5 136.0,324.2 139.7,323.9 137.0,323.6 135.6,323.3 139.0,323.0 137.1,322.7 135.2,322.4 139.9,322.1 135.3,321.8 134.6,321.5 134.9,321.2 132.3,320.9 134.9,320.6 141.6,320.3 144.1,320.0 136.5,319.7 124.3,319.4 134.7,319.2 140.7,318.9 138.9,318.6 134.8,318.3 136.5,318.0 134.2,317.7 134.3,317.4 133.9,317.1 134.0,316.8 137.4,316.5 138.1,316.2 137.8,315.9 136.0,315.6 132.7,315.3 136.3,315.0 133.9,314.7 122.2,314.4 138.0,314.1 138.5,313.8 135.4,313.5 131.4,313.2 139.1,312.9 139.8,312.6 132.3,312.4 136.8,312.1 105.2,311.8 133.4,311.5 150.1,311.2 135.4,310.9 133.3,310.6 140.1,310.3 137.1,310.0 134.5,309.7 138.7,309.4 130.8,309.1 141.3,308.8 133.9,308.5 137.0,308.2 135.1,307.9 104.8,307.6 138.6,307.3 133.8,307.0 138.3,306.7 135.3,306.4 134.2,306.1 135.4,305.8 133.2,305.6 133.8,305.3 138.6,305.0 135.5,304.7 139.1,304.4 137.1,304.1 133.0,303.8 142.2,303.5 133.9,303.2 136.6,302.9 135.8,302.6 133.5,302.3 138.6,302.0 130.9,301.7 132.2,301.4 136.0,301.1 141.7,300.8 136.8,300.5 132.8,300.2 137.2,299.9 137.4,299.6 138.1,299.3 134.3,299.0 133.2,298.8 127.9,298.5 136.5,298.2 120.2,297.9 141.1,297.6 116.1,297.3 133.8,297.0 135.1,296.7 134.5,296.4 122.0,296.1 136.5,295.8 135.8,295.5 138.8,295.2 134.6,294.9 132.1,294.6 109.1,294.3 132.1,294.0 132.0,293.7 129.7,293.4 136.7,293.1 135.3,292.8 133.6,292.5 121.1,292.2 130.3,292.0 132.1,291.7 139.8,291.4 128.5,291.1 135.0,290.8 136.6,290.5 134.9,290.2 133.6,289.9 136.6,289.6 131.4,289.3 135.9,289.0 138.3,288.7 131.4,288.4 132.0,288.1 134.6,287.8 128.5,287.5 137.9,287.2 136.0,286.9 132.3,286.6 131.0,286.3 134.7,286.0 135.1,285.7 130.9,285.4 122.4,285.2 134.8,284.9 136.8,284.6 131.1,284.3 135.4,284.0 116.9,283.7 132.6,283.4 133.5,283.1 117.9,282.8 125.4,282.5 134.3,282.2 135.0,281.9 118.3,281.6 143.5,281.3 135.6,281.0 130.0,280.7 138.0,280.4 137.4,280.1 134.8,279.8 131.1,279.5 138.0,279.2 134.0,278.9 133.6,278.6 134.9,278.4 128.5,278.1 134.4,277.8 135.9,277.5 134.1,277.2 133.5,276.9 130.4,276.6 134.9,276.3 133.6,276.0 133.0,275.7 131.4,275.4 135.4,275.1 137.3,274.8 134.0,274.5 135.4,274.2 136.6,273.9 137.3,273.6 133.5,273.3 132.2,273.0 131.6,272.7 132.8,272.4 134.3,272.1 135.3,271.8 131.5,271.6 126.1,271.3 129.9,271.0 136.2,270.7 131.6,270.4 133.6,270.1 130.6,269.8 131.8,269.5 130.7,269.2 137.3,268.9 133.6,268.6 132.1,268.3 129.9,268.0 130.8,267.7 134.1,267.4 137.1,267.1 128.5,266.8 129.9,266.5 132.0,266.2 130.7,265.9 127.9,265.6 132.5,265.3 134.5,265.0 128.1,264.8 133.0,264.5 135.1,264.2 135.2,263.9 131.3,263.6 138.8,263.3 134.0,263.0 130.2,262.7 135.2,262.4 129.3,262.1 134.9,261.8 128.9,261.5 134.6,261.2 130.8,260.9 135.6,260.6 134.5,260.3 133.7,260.0 128.1,259.7 135.4,259.4 127.4,259.1 133.6,258.8 133.6,258.5 134.0,258.2 134.8,258.0 120.5,257.7 132.8,257.4 134.7,257.1 132.9,256.8 136.9,256.5 126.9,256.2 137.2,255.9 130.6,255.6 126.3,255.3 129.6,255.0 132.1,254.7 133.1,254.4 132.5,254.1 134.9,253.8 132.5,253.5 132.5,253.2 126.7,252.9 134.0,252.6 135.5,252.3 131.5,252.0 127.5,251.7 129.0,251.4 137.4,251.2 131.1,250.9 99.1,250.6 151.1,250.3 134.7,250.0 131.2,249.7 141.0,249.4 128.7,249.1 132.6,248.8 135.7,248.5 132.6,248.2 135.4,247.9 133.5,247.6 133.4,247.3 133.6,247.0 133.2,246.7 136.0,246.4 134.5,246.1 131.6,245.8 133.5,245.5 133.0,245.2 134.6,244.9 133.8,244.6 134.4,244.4 129.2,244.1 134.4,243.8 125.6,243.5 129.7,243.2 137.9,242.9 115.7,242.6 132.9,242.3 128.5,242.0 136.6,241.7 130.9,241.4 132.2,241.1 135.2,240.8 130.8,240.5 131.0,240.2 130.5,239.9 133.5,239.6 135.4,239.3 135.0,239.0 135.0,238.7 132.9,238.4 134.3,238.1 132.1,237.8 139.5,237.6 134.6,237.3 128.6,237.0 131.1,236.7 138.6,236.4 121.5,236.1 133.0,235.8 135.4,235.5 131.2,235.2 137.3,234.9 139.0,234.6 132.1,234.3 118.2,234.0 144.1,233.7 131.7,233.4 135.2,233.1 135.2,232.8 132.9,232.5 136.9,232.2 130.6,231.9 132.3,231.6 131.7,231.3 136.8,231.0 137.0,230.8 136.7,230.5 131.2,230.2 135.2,229.9 136.2,229.6 130.4,229.3 122.6,229.0 136.8,228.7 137.0,228.4 135.8,228.1 136.6,227.8 136.0,227.5 135.6,227.2 134.9,226.9 132.8,226.6 134.6,226.3 134.2,226.0 141.8,225.7 117.9,225.4 135.3,225.1 134.8,224.8 135.1,224.5 134.7,224.2 137.0,224.0 135.4,223.7 137.8,223.4 133.6,223.1 136.6,222.8 138.1,222.5 132.5,222.2 136.2,221.9 136.4,221.6 134.8,221.3 134.4,221.0 142.3,220.7 139.0,220.4 133.2,220.1 132.4,219.8 137.7,219.5 130.8,219.2 138.6,218.9 125.1,218.6 137.6,218.3 135.5,218.0 132.6,217.7 130.8,217.4 140.1,217.2 134.8,216.9 126.1,216.6 140.5,216.3 134.4,216.0 135.5,215.7 135.5,215.4 141.5,215.1 133.3,214.8 134.7,214.5 139.8,214.2 138.4,213.9 128.0,213.6 130.8,213.3 137.2,213.0 136.0,212.7 129.0,212.4 139.2,212.1 131.4,211.8 139.7,211.5 136.7,211.2 137.9,210.9 137.1,210.6 138.7,210.4 128.0,210.1 134.9,209.8 138.6,209.5 136.9,209.2 132.9,208.9 140.2,208.6 139.8,208.3 140.4,208.0 136.7,207.7 137.4,207.4 143.9,207.1 133.8,206.8 136.6,206.5 136.9,206.2 134.6,205.9 141.5,205.6 132.0,205.3 134.2,205.0 134.6,204.7 140.0,204.4 135.7,204.1 135.5,203.8 91.5,203.6 134.3,203.3 132.8,203.0 139.2,202.7 138.1,202.4 139.2,202.1 134.6,201.8 117.4,201.5 133.7,201.2 130.7,200.9 135.6,200.6 136.7,200.3 117.7,200.0 133.5,199.7 138.0,199.4 146.1,199.1 133.9,198.8 117.1,198.5 131.5,198.2 136.9,197.9 138.6,197.6 138.4,197.3 138.5,197.0 140.1,196.8 136.5,196.5 115.3,196.2 133.5,195.9 133.9,195.6 136.8,195.3 133.8,195.0 137.7,194.7 139.9,194.4 137.1,194.1 134.0,193.8 133.9,193.5 125.8,193.2 133.7,192.9 126.3,192.6 102.4,192.3 136.0,192.0 138.9,191.7 134.3,191.4 131.9,191.1 139.8,190.8 136.4,190.5 137.7,190.2 135.6,190.0 137.8,189.7 139.2,189.4 139.4,189.1 134.8,188.8 144.0,188.5 136.6,188.2 136.1,187.9 141.0,187.6 133.5,187.3 129.0,187.0 136.6,186.7 137.5,186.4 137.1,186.1 140.3,185.8 137.6,185.5 134.2,185.2 137.9,184.9 134.9,184.6 138.6,184.3 135.8,184.0 136.3,183.7" fill="none" stroke="#1f77b4" stroke-width="0.8" stroke-linejoin="bevel"/><polyline clip-path="url(#cb)" points="191.5,523.8 192.0,523.7 192.4,523.3 192.9,523.6 193.3,523.8 193.8,522.8 194.2,523.4 194.7,522.5 195.1,522.5 195.6,521.8 196.0,520.4 196.5,519.4 196.9,519.7 197.4,519.3 197.8,518.2 198.3,518.1 198.7,518.2 199.2,516.4 199.6,517.3 200.1,514.7 200.5,514.7 201.0,513.5 201.4,514.1 201.9,512.9 202.3,511.0 202.8,509.6 203.2,509.3 203.7,508.9 204.1,509.5 204.6,507.2 205.0,507.0 205.5,506.9 206.0,504.7 206.4,506.2 206.9,503.1 207.3,504.9 207.8,504.4 208.2,503.3 208.7,504.0 209.1,502.5 209.6,501.4 210.0,502.7 210.5,501.2 210.9,501.3 211.4,499.7 211.8,497.4 212.3,498.6 212.7,497.7 213.2,497.0 213.6,498.3 214.1,496.6 214.5,497.3 215.0,497.2 215.4,498.3 215.9,496.9 216.3,494.7 216.8,494.3 217.2,495.9 217.7,495.3 218.1,495.7 218.6,496.3 219.0,497.0 219.5,492.6 220.0,495.6 220.4,494.0 220.9,492.2 221.3,494.4 221.8,493.9 222.2,493.4 222.7,494.3 223.1,493.7 223.6,494.5 224.0,492.9 224.5,493.8 224.9,495.9 225.4,496.2 225.8,495.5 226.3,495.6 226.7,495.9 227.2,494.0 227.6,496.1 228.1,495.9 228.5,495.4 229.0,498.0 229.4,495.3 229.9,495.2 230.3,494.4 230.8,497.4 231.2,497.0 231.7,496.4 232.1,497.2 232.6,498.6 233.0,496.1 233.5,497.6 234.0,497.1 234.4,498.9 234.9,496.8 235.3,498.4 235.8,499.0 236.2,497.5 236.7,497.3 237.1,499.8 237.6,497.8 238.0,497.3 238.5,499.0 238.9,501.0 239.4,499.0 239.8,498.6 240.3,501.1 240.7,498.3 241.2,500.5 241.6,500.6 242.1,499.5 242.5,500.7 243.0,499.7 243.4,501.3 243.9,501.0 244.3,501.6 244.8,501.6 245.2,501.4 245.7,501.7 246.1,502.7 246.6,501.6 247.0,502.8 247.5,501.7 248.0,502.5 248.4,503.4 248.9,504.2 249.3,503.6 249.8,502.5 250.2,503.8 250.7,503.3 251.1,504.5 251.6,504.9 252.0,505.5 252.5,506.9 252.9,504.9 253.4,505.4 253.8,505.7 254.3,505.1 254.7,507.1 255.2,504.7 255.6,508.0 256.1,506.6 256.5,508.2 257.0,507.5 257.4,506.4 257.9,509.1 258.3,507.8 258.8,508.1 259.2,508.3 259.7,508.4 260.1,508.2 260.6,508.6 261.0,508.8 261.5,508.4 262.0,508.7 262.4,509.5 262.9,510.5 263.3,508.8 263.8,509.9 264.2,508.3 264.7,510.3 265.1,510.9 265.6,508.9 266.0,510.7 266.5,511.4 266.9,509.1 267.4,511.5 267.8,509.2 268.3,511.2 268.7,510.1 269.2,510.4 269.6,512.2 270.1,510.7 270.5,511.1 271.0,510.7 271.4,510.5 271.9,509.7 272.3,511.3 272.8,511.2 273.2,509.4 273.7,510.7 274.1,510.8 274.6,512.7 275.0,512.7 275.5,512.0 276.0,511.7 276.4,511.2 276.9,509.4 277.3,512.7 277.8,512.1 278.2,511.2 278.7,511.6 279.1,510.9 279.6,512.1 280.0,512.6 280.5,510.2 280.9,511.6 281.4,513.0 281.8,512.3 282.3,512.1 282.7,513.3 283.2,511.5 283.6,512.1 284.1,512.5 284.5,512.8 285.0,510.9 285.4,512.3 285.9,512.9 286.3,513.9 286.8,513.1 287.2,511.6 287.7,510.9 288.1,513.1 288.6,513.8 289.0,512.1 289.5,512.1 290.0,511.3 290.4,512.6 290.9,511.9 291.3,513.5 291.8,513.0 292.2,512.4 292.7,512.3 293.1,511.5 293.6,510.9 294.0,513.0 294.5,510.5 294.9,512.4 295.4,512.1 295.8,510.8 296.3,513.7 296.7,512.9 297.2,512.4 297.6,511.6 298.1,510.8 298.5,510.7 299.0,512.4 299.4,511.0 299.9,511.9 300.3,510.3 300.8,511.8 301.2,510.6 301.7,512.3 302.1,510.8 302.6,512.5 303.0,511.3 303.5,512.7 304.0,511.4 304.4,511.9 304.9,511.9 305.3,510.4 305.8,509.2 306.2,509.3 306.7,509.6 307.1,509.9 307.6,509.9 308.0,510.1 308.5,510.6 308.9,509.1 309.4,510.7 309.8,507.9 310.3,506.9 310.7,502.8 311.2,506.9 311.6,509.1 312.1,509.3 312.5,511.0 313.0,511.6 313.4,512.5 313.9,511.1 314.3,509.2 314.8,510.8 315.2,509.5 315.7,510.2 316.1,511.3 316.6,512.1 317.0,511.1 317.5,510.4 318.0,511.1 318.4,510.8 318.9,510.4 319.3,511.2 319.8,512.2 320.2,511.2 320.7,510.5 321.1,511.6 321.6,511.8 322.0,511.8 322.5,511.1 322.9,511.1 323.4,511.0 323.8,512.1 324.3,511.0 324.7,511.6 325.2,512.0 325.6,512.8 326.1,512.2 326.5,511.9 327.0,511.3 327.4,511.1 327.9,511.5 328.3,511.4 328.8,512.6 329.2,511.1 329.7,511.1 330.1,511.3 330.6,512.3 331.0,512.0 331.5,512.4 332.0,513.1 332.4,512.4 332.9,513.4 333.3,513.7 333.8,511.8 334.2,511.9 334.7,511.7 335.1,512.8 335.6,512.5 336.0,512.2 336.5,512.9 336.9,514.3 337.4,511.0 337.8,511.8 338.3,511.9 338.7,512.9 339.2,513.6 339.6,513.0 340.1,512.9 340.5,514.2 341.0,513.6 341.4,512.8 341.9,512.1 342.3,512.9 342.8,513.7 343.2,514.4 343.7,511.9 344.1,513.4 344.6,513.0 345.0,513.6 345.5,514.7 346.0,512.0 346.4,513.2 346.9,512.8 347.3,514.4 347.8,513.9 348.2,512.9 348.7,514.2 349.1,514.5 349.6,514.9 350.0,515.1 350.5,513.5 350.9,514.2 351.4,515.6 351.8,513.1 352.3,513.3 352.7,513.5 353.2,515.8 353.6,514.3 354.1,513.5 354.5,515.3 355.0,515.1 355.4,514.8 355.9,516.1 356.3,514.5 356.8,514.0 357.2,514.1 357.7,513.0 358.1,513.3 358.6,512.7 359.0,512.8 359.5,514.0 360.0,515.2 360.4,515.4 360.9,515.2 361.3,515.5 361.8,515.0 362.2,514.5 362.7,513.5 363.1,514.1 363.6,515.7 364.0,515.7 364.5,514.0 364.9,515.0 365.4,515.9 365.8,515.8 366.3,515.7 366.7,515.5 367.2,513.2 367.6,508.9 368.1,505.1 368.5,507.3 369.0,511.6 369.4,514.9 369.9,515.8 370.3,515.4 370.8,516.7 371.2,514.7 371.7,515.9 372.1,515.6 372.6,517.0 373.0,516.7 373.5,516.8 374.0,516.4 374.4,517.9 374.9,516.2 375.3,517.7 375.8,516.4 376.2,516.0 376.7,516.7 377.1,516.8 377.6,516.9 378.0,516.9 378.5,516.6 378.9,516.2 379.4,516.4 379.8,515.9 380.3,516.9 380.7,517.3 381.2,517.3 381.6,517.8 382.1,517.3 382.5,517.5 383.0,515.9 383.4,516.8 383.9,516.0 384.3,518.5 384.8,517.0 385.2,516.6 385.7,517.1 386.1,517.6 386.6,517.3 387.0,517.3 387.5,517.4 388.0,517.3 388.4,516.9 388.9,517.4 389.3,517.4 389.8,517.6 390.2,517.3 390.7,518.1 391.1,517.3 391.6,517.9 392.0,517.2 392.5,518.1 392.9,517.8 393.4,517.6 393.8,517.7 394.3,516.0 394.7,516.2 395.2,516.8 395.6,516.7 396.1,518.2 396.5,518.4 397.0,517.9 397.4,517.2 397.9,518.7 398.3,517.8 398.8,518.8 399.2,519.4 399.7,518.7 400.1,518.4 400.6,519.0 401.0,519.0 401.5,519.9 402.0,520.7 402.4,519.3 402.9,520.3 403.3,519.6 403.8,520.0 404.2,519.6 404.7,519.2 405.1,520.7 405.6,519.9 406.0,519.9 406.5,519.2 406.9,519.9 407.4,520.4 407.8,520.3 408.3,519.1 408.7,520.6 409.2,520.1 409.6,520.0 410.1,520.8 410.5,520.7 411.0,521.3 411.4,520.8 411.9,520.0 412.3,520.3 412.8,521.4 413.2,519.7 413.7,521.2 414.1,521.0 414.6,519.7 415.0,520.4 415.5,520.7 416.0,519.9 416.4,520.7 416.9,520.5 417.3,521.0 417.8,520.8 418.2,520.8 418.7,520.3 419.1,521.2 419.6,521.0 420.0,522.0 420.5,521.8 420.9,520.6 421.4,521.2 421.8,521.2 422.3,520.7 422.7,521.2 423.2,521.0 423.6,521.2 424.1,522.1 424.5,520.9 425.0,520.5 425.4,520.6 425.9,521.2 426.3,521.1 426.8,521.1 427.2,520.6 427.7,520.8 428.1,521.5 428.6,521.5 429.0,521.5 429.5,521.7 430.0,521.8 430.4,521.6 430.9,522.7 431.3,521.4 431.8,521.8 432.2,522.2 432.7,521.7 433.1,522.0 433.6,521.1 434.0,522.2 434.5,521.7 434.9,521.6 435.4,522.2 435.8,522.4 436.3,521.7 436.7,522.1 437.2,522.3 437.6,522.6 438.1,521.7 438.5,521.3 439.0,522.2 439.4,521.8 439.9,521.6 440.3,521.6 440.8,522.3 441.2,521.9 441.7,521.8 442.1,521.0 442.6,522.0 443.0,521.7 443.5,521.8 444.0,521.9 444.4,522.6 444.9,522.1 445.3,521.6 445.8,522.4 446.2,522.2 446.7,522.6 447.1,522.2 447.6,522.2 448.0,522.0 448.5,522.5 448.9,522.5 449.4,522.6 449.8,522.3 450.3,522.3 450.7,521.5 451.2,522.7 451.6,522.2 452.1,522.7 452.5,522.7 453.0,522.1 453.4,522.4 453.9,522.3 454.3,523.1 454.8,521.6 455.2,521.8 455.7,522.9 456.1,523.1 456.6,522.9 457.0,522.6 457.5,523.0 458.0,522.6 458.4,523.0 458.9,521.7 459.3,522.8 459.8,522.9 460.2,522.0 460.7,522.7 461.1,522.8 461.6,522.8 462.0,522.6 462.5,523.0 462.9,522.8 463.4,523.1 463.8,523.4 464.3,523.0 464.7,522.9 465.2,522.4 465.6,522.9 466.1,523.1 466.5,522.9 467.0,522.8 467.4,523.8 467.9,523.2 468.3,523.8 468.8,523.7 469.2,523.3 469.7,523.1 470.1,523.1 470.6,523.1 471.0,522.7 471.5,523.0 472.0,523.0 472.4,523.3 472.9,522.5 473.3,522.8 473.8,523.4 474.2,523.4 474.7,523.0 475.1,522.9 475.6,523.4 476.0,522.9 476.5,523.7 476.9,523.4 477.4,523.0 477.8,523.5 478.3,523.3 478.7,523.4 479.2,523.5 479.6,524.0 480.1,523.5 480.5,523.4 481.0,523.4 481.4,523.2 481.9,523.2 482.3,523.6 482.8,523.5 483.2,522.9 483.7,523.2 484.1,523.4 484.6,523.5 485.0,523.0 485.5,522.9 486.0,523.1 486.4,522.8 486.9,522.8 487.3,522.7 487.8,522.0 488.2,523.0 488.7,522.5 489.1,523.2 489.6,523.1 490.0,522.7 490.5,523.3 490.9,523.1 491.4,523.0 491.8,522.8 492.3,522.6 492.7,522.5 493.2,523.3 493.6,523.1 494.1,523.9 494.5,523.0 495.0,523.8 495.4,523.9 495.9,523.7 496.3,523.7 496.8,523.8 497.2,524.3 497.7,523.5 498.1,523.6 498.6,523.9 499.0,524.1 499.5,523.7 500.0,523.5 500.4,524.3 500.9,524.1 501.3,523.8 501.8,524.1 502.2,523.9 502.7,523.9 503.1,523.6 503.6,523.6 504.0,523.6 504.5,523.6 504.9,524.0 505.4,524.5 505.8,523.8 506.3,523.7 506.7,523.7 507.2,524.1 507.6,523.3 508.1,524.4 508.5,523.7 509.0,523.7 509.4,523.6 509.9,523.5 510.3,523.8 510.8,523.8 511.2,524.0 511.7,523.7 512.1,523.8 512.6,523.7 513.0,524.2 513.5,524.4 514.0,523.9 514.4,523.8 514.9,524.4 515.3,524.2 515.8,524.0 516.2,523.9 516.7,523.9 517.1,523.7 517.6,524.0 518.0,523.9 518.5,523.6 518.9,524.0 519.4,523.4 519.8,524.1 520.3,523.9 520.7,524.5 521.2,524.0 521.6,524.1 522.1,524.2 522.5,523.9 523.0,524.3 523.4,523.9 523.9,524.5 524.3,524.0 524.8,523.3 525.2,523.5 525.7,523.1 526.1,523.2 526.6,523.2 527.0,522.5 527.5,522.7 528.0,523.0 528.4,523.4 528.9,523.2 529.3,523.7 529.8,523.2 530.2,523.0 530.7,523.2 531.1,522.5 531.6,522.8 532.0,522.8 532.5,523.7 532.9,523.8 533.4,523.8 533.8,523.7 534.3,523.7 534.7,523.9 535.2,524.1 535.6,523.9 536.1,524.1 536.5,524.0 537.0,523.9 537.4,524.2 537.9,523.9 538.3,524.4 538.8,524.3 539.2,523.9 539.7,524.2 540.1,523.9 540.6,524.0 541.0,524.1 541.5,523.7 542.0,523.9 542.4,524.2 542.9,524.2 543.3,524.0 543.8,524.5 544.2,523.8 544.7,524.1 545.1,524.5 545.6,524.3 546.0,523.7 546.5,524.0 546.9,523.5 547.4,524.1 547.8,524.0 548.3,523.6 548.7,523.6 549.2,524.3 549.6,523.9 550.1,524.4 550.5,524.2 551.0,524.5 551.4,524.0 551.9,524.4 552.3,524.3 552.8,523.6 553.2,523.9 553.7,524.2 554.1,524.5 554.6,524.0 555.0,524.5 555.5,524.3 556.0,524.0 556.4,523.9 556.9,524.1 557.3,523.9 557.8,524.1 558.2,524.3 558.7,524.1 559.1,523.7 559.6,524.1 560.0,524.1 560.5,524.0 560.9,524.5 561.4,524.4 561.8,524.5 562.3,524.1 562.7,524.2 563.2,524.4 563.6,524.5 564.1,524.0 564.5,523.9 565.0,524.0 565.4,524.1 565.9,524.0 566.3,524.1 566.8,524.1 567.2,524.3 567.7,524.4 568.1,524.3 568.6,524.1 569.0,523.8 569.5,524.4 570.0,524.4 570.4,524.0 570.9,524.0 571.3,524.3 571.8,524.3 572.2,524.3 572.7,524.1 573.1,523.4 573.6,524.4 574.0,524.1 574.5,524.3 574.9,524.1 575.4,524.1 575.8,524.1 576.3,524.4 576.7,524.4 577.2,524.0 577.6,524.1 578.1,524.1 578.5,524.1 579.0,524.4 579.4,523.9 579.9,524.4 580.3,524.5 580.8,524.4 581.2,524.2 581.7,523.6 582.1,524.2 582.6,524.1 583.0,523.8 583.5,524.3 584.0,524.5 584.4,524.4 584.9,524.3 585.3,524.5 585.8,524.3 586.2,524.2 586.7,523.7 587.1,524.0 587.6,524.2 588.0,524.4 588.5,524.4 588.9,524.5 589.4,524.3 589.8,524.5 590.3,524.3 590.7,523.9 591.2,524.3 591.6,524.1 592.1,524.5 592.5,524.5 593.0,524.2 593.4,524.3 593.9,524.1 594.3,524.2 594.8,524.1 595.2,524.4 595.7,524.1 596.1,524.0 596.6,524.4 597.0,524.3 597.5,524.0" fill="none" stroke="#1f77b4" stroke-width="1.0" stroke-linejoin="bevel"/></svg>
<div style="position:absolute;left:90px;top:183px;width:102px;height:1px;background:#000;"></div>
<div style="position:absolute;left:90px;top:456px;width:102px;height:1px;background:#000;"></div>
<div style="position:absolute;left:90px;top:183px;width:1px;height:274px;background:#000;"></div>
<div style="position:absolute;left:191px;top:183px;width:1px;height:342px;background:#000;"></div>
<div style="position:absolute;left:191px;top:183px;width:407px;height:1px;background:#000;"></div>
<div style="position:absolute;left:597px;top:183px;width:1px;height:342px;background:#000;"></div>
<div style="position:absolute;left:191px;top:456px;width:407px;height:1px;background:#000;"></div>
<div style="position:absolute;left:191px;top:524px;width:407px;height:1px;background:#000;"></div>
<div style="position:absolute;left:90px;top:179px;width:1px;height:4px;background:#000;"></div>
<div class="t mt" style="left:30.50px;width:120px;text-align:center;top:161.30px;font-size:13.2px;transform:scaleX(1.04);transform-origin:50% 0;">0</div>
<div style="position:absolute;left:140px;top:179px;width:1px;height:4px;background:#000;"></div>
<div class="t mt" style="left:80.50px;width:120px;text-align:center;top:161.30px;font-size:13.2px;transform:scaleX(1.04);transform-origin:50% 0;">100</div>
<div style="position:absolute;left:191px;top:179px;width:1px;height:4px;background:#000;"></div>
<div class="t mt" style="left:131.50px;width:120px;text-align:center;top:161.30px;font-size:13.2px;transform:scaleX(1.04);transform-origin:50% 0;">200</div>
<div style="position:absolute;left:86px;top:397px;width:4px;height:1px;background:#000;"></div>
<div class="t mt" style="left:-19.70px;width:100px;text-align:right;top:390.30px;font-size:13.2px;transform:scaleX(1.04);transform-origin:100% 0;">200</div>
<div style="position:absolute;left:86px;top:338px;width:4px;height:1px;background:#000;"></div>
<div class="t mt" style="left:-19.70px;width:100px;text-align:right;top:331.30px;font-size:13.2px;transform:scaleX(1.04);transform-origin:100% 0;">400</div>
<div style="position:absolute;left:86px;top:279px;width:4px;height:1px;background:#000;"></div>
<div class="t mt" style="left:-19.70px;width:100px;text-align:right;top:272.30px;font-size:13.2px;transform:scaleX(1.04);transform-origin:100% 0;">600</div>
<div style="position:absolute;left:86px;top:220px;width:4px;height:1px;background:#000;"></div>
<div class="t mt" style="left:-19.70px;width:100px;text-align:right;top:213.30px;font-size:13.2px;transform:scaleX(1.04);transform-origin:100% 0;">800</div>
<div style="position:absolute;left:598px;top:524px;width:4px;height:1px;background:#000;"></div>
<div class="t mt" style="left:606.50px;top:517.30px;font-size:13.2px;transform:scaleX(1.04);transform-origin:0 0;">0</div>
<div style="position:absolute;left:598px;top:490px;width:4px;height:1px;background:#000;"></div>
<div class="t mt" style="left:606.50px;top:483.30px;font-size:13.2px;transform:scaleX(1.04);transform-origin:0 0;">100</div>
<div style="position:absolute;left:598px;top:456px;width:4px;height:1px;background:#000;"></div>
<div class="t mt" style="left:606.50px;top:449.30px;font-size:13.2px;transform:scaleX(1.04);transform-origin:0 0;">200</div>
<div style="position:absolute;left:242px;top:525px;width:1px;height:4px;background:#000;"></div>
<div class="t mt" style="left:182.50px;width:120px;text-align:center;top:531.60px;font-size:13.2px;transform:scaleX(1.04);transform-origin:50% 0;">2500</div>
<div style="position:absolute;left:293px;top:525px;width:1px;height:4px;background:#000;"></div>
<div class="t mt" style="left:233.50px;width:120px;text-align:center;top:531.60px;font-size:13.2px;transform:scaleX(1.04);transform-origin:50% 0;">5000</div>
<div style="position:absolute;left:343px;top:525px;width:1px;height:4px;background:#000;"></div>
<div class="t mt" style="left:283.50px;width:120px;text-align:center;top:531.60px;font-size:13.2px;transform:scaleX(1.04);transform-origin:50% 0;">7500</div>
<div style="position:absolute;left:394px;top:525px;width:1px;height:4px;background:#000;"></div>
<div class="t mt" style="left:334.50px;width:120px;text-align:center;top:531.60px;font-size:13.2px;transform:scaleX(1.04);transform-origin:50% 0;">10000</div>
<div style="position:absolute;left:445px;top:525px;width:1px;height:4px;background:#000;"></div>
<div class="t mt" style="left:385.50px;width:120px;text-align:center;top:531.60px;font-size:13.2px;transform:scaleX(1.04);transform-origin:50% 0;">12500</div>
<div style="position:absolute;left:496px;top:525px;width:1px;height:4px;background:#000;"></div>
<div class="t mt" style="left:436.50px;width:120px;text-align:center;top:531.60px;font-size:13.2px;transform:scaleX(1.04);transform-origin:50% 0;">15000</div>
<div style="position:absolute;left:546px;top:525px;width:1px;height:4px;background:#000;"></div>
<div class="t mt" style="left:486.50px;width:120px;text-align:center;top:531.60px;font-size:13.2px;transform:scaleX(1.04);transform-origin:50% 0;">17500</div>
<div style="position:absolute;left:597px;top:525px;width:1px;height:4px;background:#000;"></div>
<div class="t mt" style="left:537.50px;width:120px;text-align:center;top:531.60px;font-size:13.2px;transform:scaleX(1.04);transform-origin:50% 0;">20000</div>
<div class="t mt" style="left:315px;width:160px;text-align:center;top:548.5px;font-size:13.2px;transform:scaleX(1.09)">Time-of-flight (<i>µs</i>)</div>
<div class="t mt" style="left:6.600000000000001px;width:80px;text-align:center;top:313.7px;font-size:13.2px;transform:rotate(-90deg) scaleX(1.05)">Spectrum</div>
<div style="position:absolute;left:9px;top:575px;width:11px;height:12px;background:#e1e1e1;border:1px solid #d5d5d5;box-sizing:border-box"></div>
<div class="t" style="left:9px;width:11px;text-align:center;top:576.5px;font-size:8.7px">?</div>
<div class="t" style="left:22.40px;top:577.00px;font-size:8.7px;color:#000;transform:scaleX(0.9999);transform-origin:0 0;">Keys: arrow keys control mouse pointer, workspace cuts: c=both cuts, x=X, y=Y.</div>
</body></html>
